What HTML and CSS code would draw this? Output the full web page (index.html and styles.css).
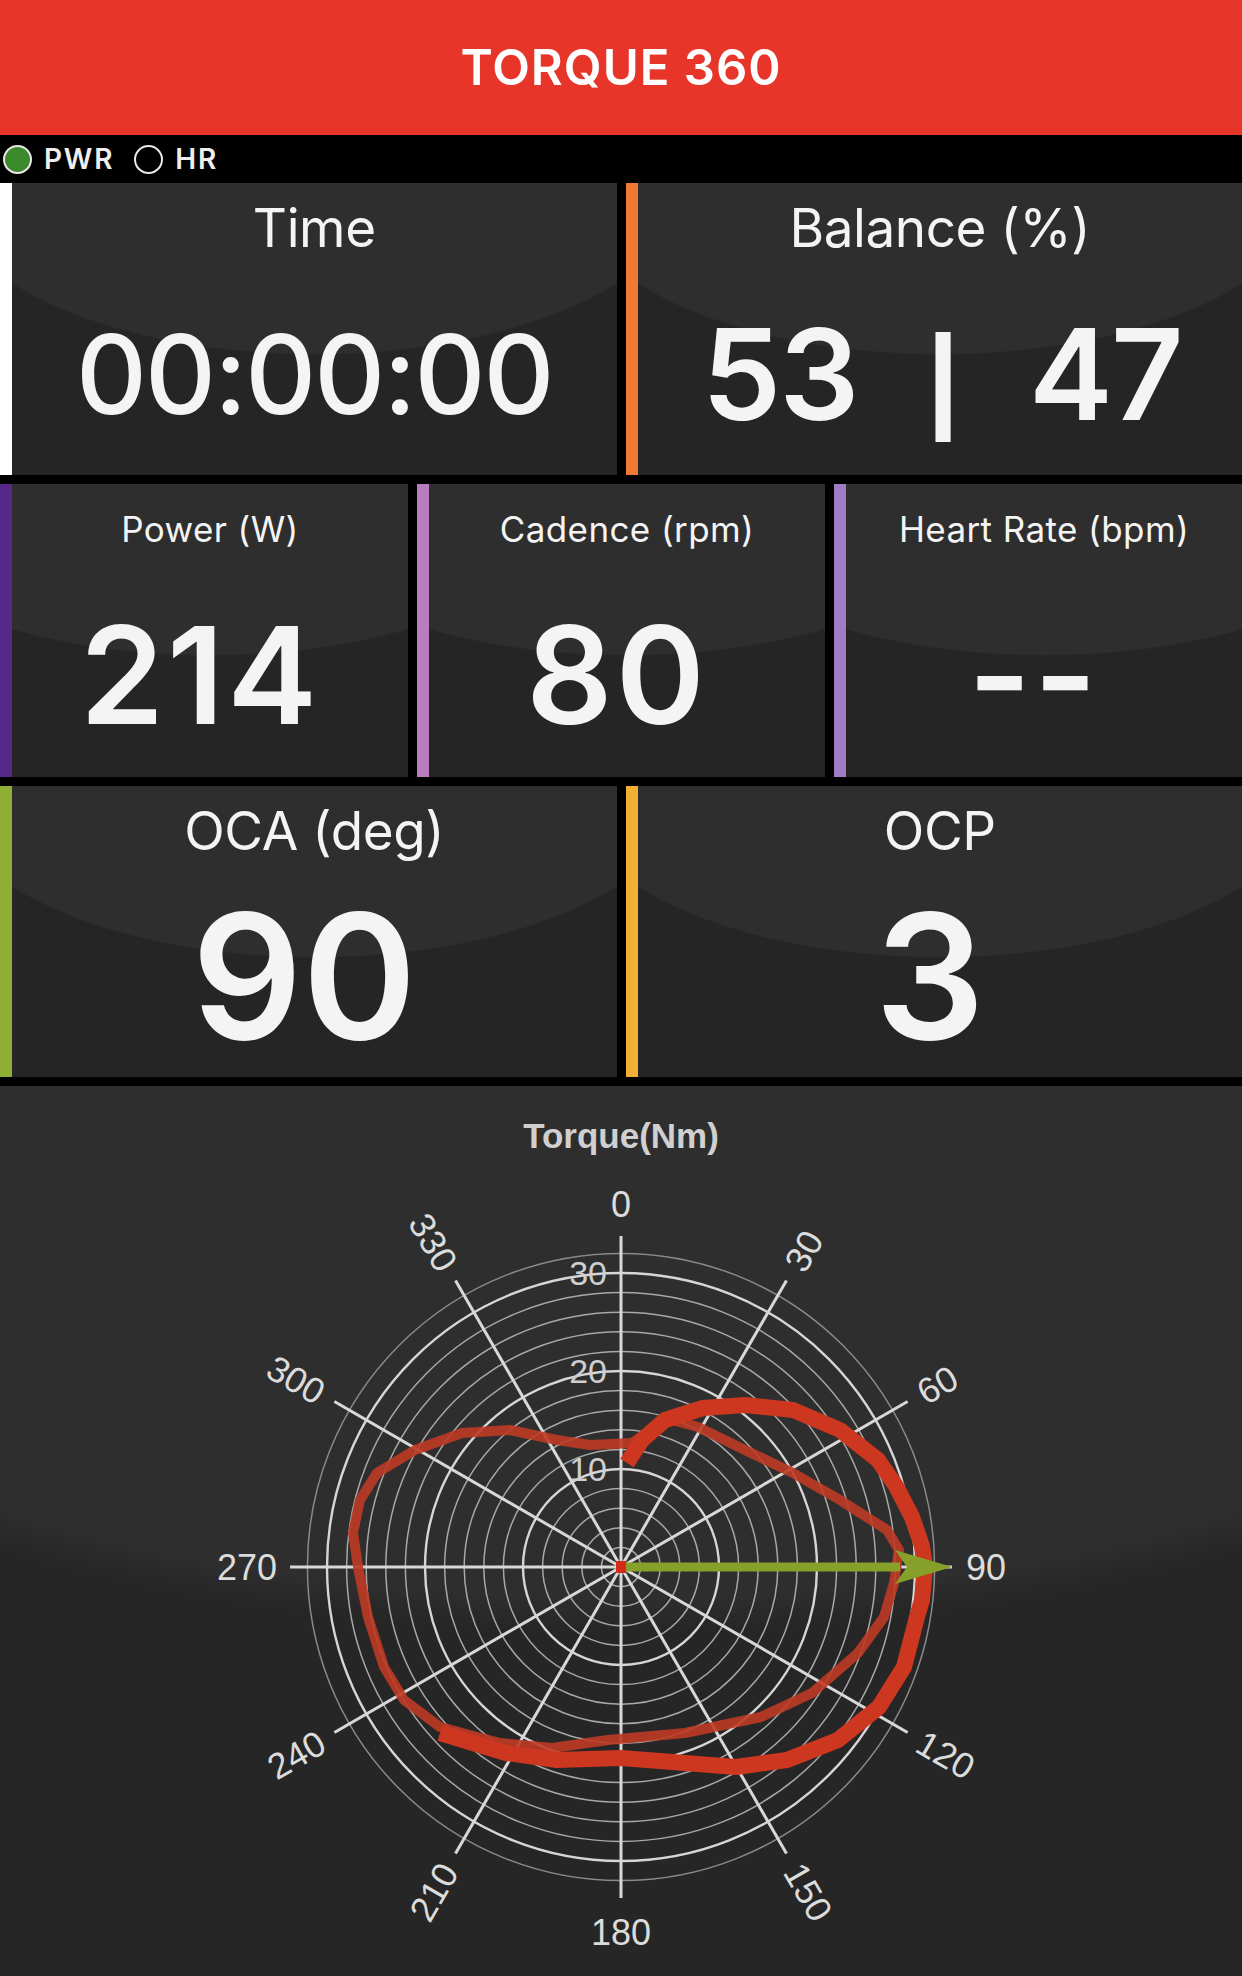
FILE: index.html
```html
<!DOCTYPE html>
<html lang="en">
<head>
    <meta charset="UTF-8">
    <meta name="viewport" content="width=device-width, initial-scale=1.0">
    <title>Torque 360</title>
    <link rel="stylesheet" href="styles.css">
</head>
<body>
    <header class="app-bar">
        <h1>TORQUE 360</h1>
    </header>

    <div class="status">
        <span class="sensor"><span class="dot on"></span>PWR</span>
        <span class="sensor"><span class="dot"></span>HR</span>
    </div>

    <main class="board">
        <section class="row row-two row-top">
            <div class="tile accent-white">
                <div class="label">Time</div>
                <div class="value time">00:00:00</div>
            </div>
            <div class="tile accent-orange">
                <div class="label">Balance (%)</div>
                <div class="value balance"><span>53</span><span class="sep">|</span><span>47</span></div>
            </div>
        </section>

        <section class="row row-three">
            <div class="tile accent-purple">
                <div class="label small">Power (W)</div>
                <div class="value mid">214</div>
            </div>
            <div class="tile accent-orchid">
                <div class="label small">Cadence (rpm)</div>
                <div class="value mid">80</div>
            </div>
            <div class="tile accent-lavender">
                <div class="label small">Heart Rate (bpm)</div>
                <div class="value mid">--</div>
            </div>
        </section>

        <section class="row row-two row-bottom">
            <div class="tile accent-green">
                <div class="label">OCA (deg)</div>
                <div class="value big">90</div>
            </div>
            <div class="tile accent-yellow">
                <div class="label">OCP</div>
                <div class="value big">3</div>
            </div>
        </section>

        <section class="chart">
            <svg class="polar" width="1242" height="890" viewBox="0 0 1242 890">
                <text class="chart-title" x="621" y="62">Torque(Nm)</text>

                <g class="rings" fill="none">
                    <circle cx="621" cy="481" r="19.6"/>
                    <circle cx="621" cy="481" r="39.2"/>
                    <circle cx="621" cy="481" r="58.8"/>
                    <circle cx="621" cy="481" r="78.4"/>
                    <circle class="major" cx="621" cy="481" r="98"/>
                    <circle cx="621" cy="481" r="117.6"/>
                    <circle cx="621" cy="481" r="137.2"/>
                    <circle cx="621" cy="481" r="156.8"/>
                    <circle cx="621" cy="481" r="176.4"/>
                    <circle class="major" cx="621" cy="481" r="196"/>
                    <circle cx="621" cy="481" r="215.6"/>
                    <circle cx="621" cy="481" r="235.2"/>
                    <circle cx="621" cy="481" r="254.8"/>
                    <circle cx="621" cy="481" r="274.4"/>
                    <circle class="major" cx="621" cy="481" r="294"/>
                    <circle class="outer" cx="621" cy="481" r="313.6"/>
                </g>

                <g class="spokes">
                    <line x1="621" y1="481" x2="621" y2="150"/>
                    <line x1="621" y1="481" x2="786.5" y2="194.4"/>
                    <line x1="621" y1="481" x2="907.6" y2="315.5"/>
                    <line x1="621" y1="481" x2="952" y2="481"/>
                    <line x1="621" y1="481" x2="907.6" y2="646.5"/>
                    <line x1="621" y1="481" x2="786.5" y2="767.6"/>
                    <line x1="621" y1="481" x2="621" y2="812"/>
                    <line x1="621" y1="481" x2="455.5" y2="767.6"/>
                    <line x1="621" y1="481" x2="334.4" y2="646.5"/>
                    <line x1="621" y1="481" x2="290" y2="481"/>
                    <line x1="621" y1="481" x2="334.4" y2="315.5"/>
                    <line x1="621" y1="481" x2="455.5" y2="194.4"/>
                </g>

                <g class="angle-labels">
                    <text text-anchor="middle" x="621" y="131">0</text>
                    <text transform="translate(793.5 182.2) rotate(-60)" y="13">30</text>
                    <text transform="translate(919.8 308.5) rotate(-30)" y="13">60</text>
                    <text x="966" y="494">90</text>
                    <text transform="translate(919.8 653.5) rotate(30)" y="13">120</text>
                    <text transform="translate(793.5 779.8) rotate(60)" y="13">150</text>
                    <text text-anchor="middle" x="621" y="859">180</text>
                    <text text-anchor="end" transform="translate(448.5 779.8) rotate(-60)" y="13">210</text>
                    <text text-anchor="end" transform="translate(322.2 653.5) rotate(-30)" y="13">240</text>
                    <text text-anchor="end" x="277" y="494">270</text>
                    <text text-anchor="end" transform="translate(322.2 308.5) rotate(30)" y="13">300</text>
                    <text text-anchor="end" transform="translate(448.5 182.2) rotate(60)" y="13">330</text>
                </g>

                <g class="ring-labels">
                    <text x="607" y="199">30</text>
                    <text x="607" y="297">20</text>
                    <text x="607" y="395">10</text>
                </g>

                <polyline class="trace thin" points="668,333 632,357 590,359 557,354 510,344 462,347 415,364 377,387 360,414 353,447 358,481 368,531 384,581 404,614 440,641 500,657 552,662 608,654 685,647 761,631 812,607 858,567 884,531 894,497 899,464 887,444 840,414 793,387 745,364 698,341 668,333"/>
                <polyline class="trace thick" points="627,377 642,354 665,334 703,322 745,319 793,324 840,344 878,374 896,400 912,431 922,460 925,481 922,514 917,531 904,581 879,621 838,654 787,674 736,681 685,677 621,672 557,674 506,667 440,647"/>

                <line class="arrow-shaft" x1="621" y1="481" x2="900" y2="481"/>
                <polygon class="arrow-head" points="895,464 952,481 895,498 907,481"/>
                <rect class="hub" x="616" y="475" width="10" height="12"/>
            </svg>
        </section>
    </main>
</body>
</html>
```

FILE: styles.css
```css
body {
    margin: 0;
    width: 1242px;
    background-color: #000;
    font-family: "Inter", "Liberation Sans", sans-serif;
    color: #f4f4f4;
}

.app-bar {
    height: 135px;
    background-color: #e8352a;
    display: flex;
    justify-content: center;
    align-items: center;
}

    .app-bar h1 {
        margin: 0;
        font-size: 49px;
        font-weight: 600;
        letter-spacing: 1px;
        color: #fff;
    }

.status {
    height: 48px;
    display: flex;
    align-items: center;
    gap: 20px;
    padding-left: 3px;
    font-size: 28px;
    font-weight: 600;
    letter-spacing: 1.8px;
    color: #eee;
}

.sensor {
    display: flex;
    align-items: center;
    gap: 12px;
}

.dot {
    width: 25px;
    height: 25px;
    border: 2.5px solid #e8e8e8;
    border-radius: 50%;
}

    .dot.on {
        background-color: #3a8a2b;
    }

.board {
    display: flex;
    flex-direction: column;
    gap: 9px;
}

.row {
    display: grid;
    column-gap: 9px;
}

.row-two {
    grid-template-columns: 1fr 1fr;
}

.row-three {
    grid-template-columns: 1fr 1fr 1fr;
    height: 293px;
}

.row-top {
    height: 292px;
}

.row-bottom {
    height: 291px;
}

.tile {
    display: grid;
    grid-template-rows: 90px 1fr;
    justify-items: center;
    align-items: center;
    border-left: 12px solid #fff;
    background: radial-gradient(ellipse 375px 172px at 50% 0, #2e2e2e 99%, #252525 100%);
    line-height: 1;
}

.accent-white { border-left-color: #ffffff; }
.accent-orange { border-left-color: #ef7a33; }
.accent-purple { border-left-color: #56288a; }
.accent-orchid { border-left-color: #b97dbf; }
.accent-lavender { border-left-color: #a07cc5; }
.accent-green { border-left-color: #8fae36; }
.accent-yellow { border-left-color: #f0b034; }

.label {
    font-size: 53px;
    font-weight: 400;
    letter-spacing: -0.4px;
}

    .label.small {
        font-size: 35px;
        letter-spacing: 0.4px;
    }

.value {
    font-weight: 600;
}

    .value.time {
        font-size: 110px;
        font-weight: 500;
        letter-spacing: -2px;
    }

    .value.balance {
        font-size: 126px;
        display: flex;
        align-items: baseline;
        gap: 68px;
        letter-spacing: -2px;
        padding-left: 4px;
    }

    .value.balance .sep {
        font-size: 92px;
        font-weight: 800;
        letter-spacing: 0;
    }

    .value.mid {
        font-size: 135px;
        letter-spacing: 3px;
        padding-right: 20px;
    }

    .value.big {
        font-size: 173px;
        padding-right: 20px;
    }

.chart {
    height: 890px;
    background: radial-gradient(ellipse 1170px 545px at 50% 0, #2e2e2e 94%, #262626 100%);
}

.polar {
    display: block;
}

.chart-title {
    font-family: "Liberation Sans", Arial, sans-serif;
    font-size: 35px;
    font-weight: bold;
    fill: #d0d0d0;
    text-anchor: middle;
}

.rings circle {
    stroke: #a8a8a8;
    stroke-width: 1.5;
}

    .rings circle.major {
        stroke: #d6d6d6;
        stroke-width: 2.4;
    }

    .rings circle.outer {
        stroke: #8a8a8a;
    }

.spokes line {
    stroke: #d8d8d8;
    stroke-width: 3;
}

.angle-labels text,
.ring-labels text {
    font-family: "Liberation Sans", Arial, sans-serif;
    font-size: 36px;
    fill: #dcdcdc;
}

.ring-labels text {
    font-size: 34px;
    text-anchor: end;
    fill: #cfcfcf;
}

.trace {
    fill: none;
    stroke-linejoin: round;
    stroke-linecap: butt;
}

    .trace.thin {
        stroke: #bf3b25;
        stroke-width: 10;
        opacity: 0.9;
    }

    .trace.thick {
        stroke: #cd3720;
        stroke-width: 16;
    }

.arrow-shaft {
    stroke: #86a02a;
    stroke-width: 9;
}

.arrow-head {
    fill: #86a02a;
}

.hub {
    fill: #d42a1a;
}
```
